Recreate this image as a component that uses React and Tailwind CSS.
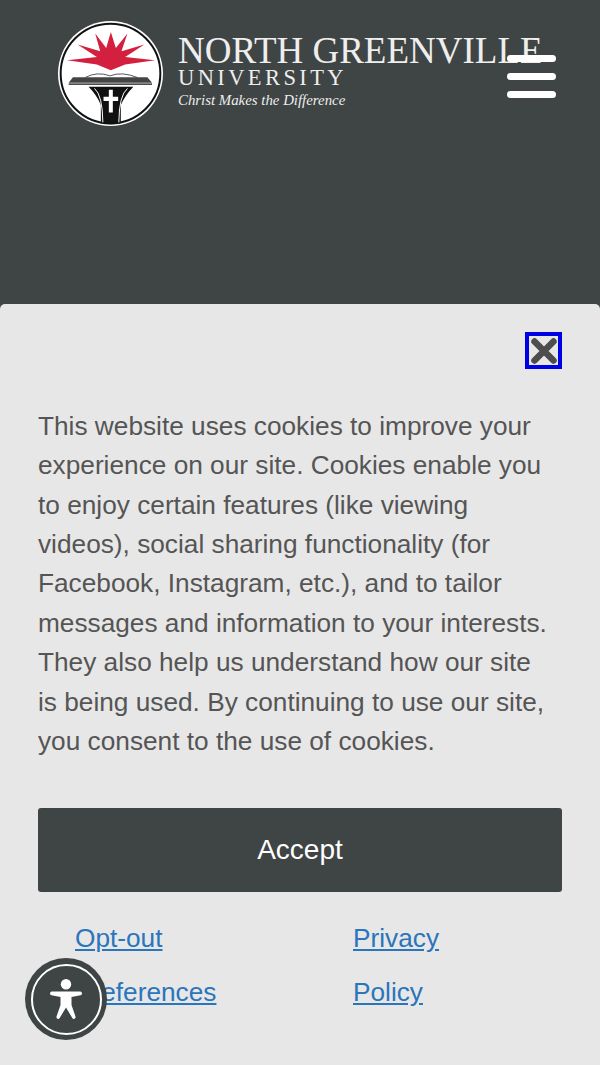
import React from "react";

const Logo = () => (
  <svg viewBox="21 14 320 322" className="h-[107px] w-[107px] shrink-0">
    <circle cx="181" cy="175" r="158" fill="#fff" />
    <circle cx="181" cy="175" r="150" fill="#fff" stroke="#111" strokeWidth="6" />
    <path
      d="M50 135 L140 125 L82 88 L150 108 L135 55 L168 98 L182 50 L197 98 L232 55 L214 108 L283 88 L225 125 L315 135 L225 148 L182 165 L140 148 Z"
      fill="#d3203f"
    />
    <path d="M105 187 Q140 168 180 182 Q215 168 262 187" fill="#fff" stroke="#555" strokeWidth="3" />
    <path d="M68 186 L292 186 L306 203 L55 203 Z" fill="#444" />
    <path d="M55 205 L306 205 L306 209 L55 209 Z" fill="#111" />
    <path d="M115 215 L250 215 Q225 240 212 270 L212 325 Q182 332 152 325 L152 270 Q140 240 115 215 Z" fill="#111" />
    <path d="M133 220 Q157 240 158 322" fill="none" stroke="#fff" strokeWidth="3" />
    <path d="M232 220 Q207 240 206 322" fill="none" stroke="#fff" strokeWidth="3" />
    <path d="M176 224 H188 V245 H204 V258 H188 V292 H176 V258 H160 V245 H176 Z" fill="#fff" />
  </svg>
);

const AccessIcon = () => (
  <svg viewBox="0 0 32 40" className="h-10 w-8" fill="#fff">
    <circle cx="16" cy="5.2" r="5.2" />
    <path d="M1.5 12.5 L30.5 12.5 Q32 13 32 14.5 Q32 16 30.5 16.3 L21.5 18 L21.5 26 L25.5 37.5 Q26 39.5 24 40 Q22.8 40 22 38.5 L16 28.5 L10 38.5 Q9.2 40 8 40 Q6 39.5 6.5 37.5 L10.5 26 L10.5 18 L1.5 16.3 Q0 16 0 14.5 Q0 13 1.5 12.5 Z" />
  </svg>
);

export default function App() {
  return (
    <div className="relative h-[1065px] w-[600px] overflow-hidden bg-[#3f4444] font-['Liberation_Sans',sans-serif]">
      <header className="flex items-start pl-[57px] pt-[20px]">
        <Logo />
        <div className="ml-[14px] mt-[13px] whitespace-nowrap font-['Liberation_Serif',serif] text-[#eeeeee]">
          <div className="text-[37px] leading-[35px]">NORTH GREENVILLE</div>
          <div className="text-[22.5px] leading-[20px] tracking-[3.4px]">UNIVERSITY</div>
          <div className="mt-[3px] text-[14.85px] leading-[18px] italic">Christ Makes the Difference</div>
        </div>
      </header>

      <button className="absolute left-[507px] top-[55px] flex w-[49px] flex-col gap-[11px]">
        <span className="h-[7px] rounded-full bg-white" />
        <span className="h-[7px] rounded-full bg-white" />
        <span className="h-[7px] rounded-full bg-white" />
      </button>

      <section className="absolute inset-x-0 bottom-0 top-[304px] rounded-t-[5px] bg-[#e7e7e7] px-[38px]">
        <div className="flex justify-end pt-[28px]">
          <button className="flex h-[37px] w-[37px] items-center justify-center border-4 border-[#0000e6]">
            <svg viewBox="0 0 28 28" className="h-[28px] w-[28px]">
              <path d="M4.5 4.5 L23.5 23.5 M23.5 4.5 L4.5 23.5" stroke="#4d4d4d" strokeWidth="6.5" strokeLinecap="round" />
            </svg>
          </button>
        </div>
        <p className="mt-[38px] pr-[8px] text-[26.24px] leading-[39.36px] text-[#555]">
          This website uses cookies to improve your experience on our site. Cookies enable you to enjoy certain features (like viewing videos), social sharing functionality (for Facebook, Instagram, etc.), and to tailor messages and information to your interests. They also help us understand how our site is being used. By continuing to use our site, you consent to the use of cookies.
        </p>
        <button className="mt-[47px] h-[84px] w-full rounded-[3px] bg-[#3f4444] text-[28px] text-white">Accept</button>
        <div className="mt-[19px] grid grid-cols-2 text-[26.24px] leading-[54px] text-[#2a75bb] underline">
          <div className="pl-[37px]">
            <a href="#">Opt-out</a>
            <br />
            <a href="#">Preferences</a>
          </div>
          <div className="pl-[53px]">
            <a href="#">Privacy</a>
            <br />
            <a href="#">Policy</a>
          </div>
        </div>
      </section>

      <button className="absolute left-[25px] top-[958px] flex h-[82px] w-[82px] items-center justify-center rounded-full bg-[#3f4444]">
        <span className="flex h-[71px] w-[71px] items-center justify-center rounded-full border-[2.5px] border-white">
          <AccessIcon />
        </span>
      </button>
    </div>
  );
}
